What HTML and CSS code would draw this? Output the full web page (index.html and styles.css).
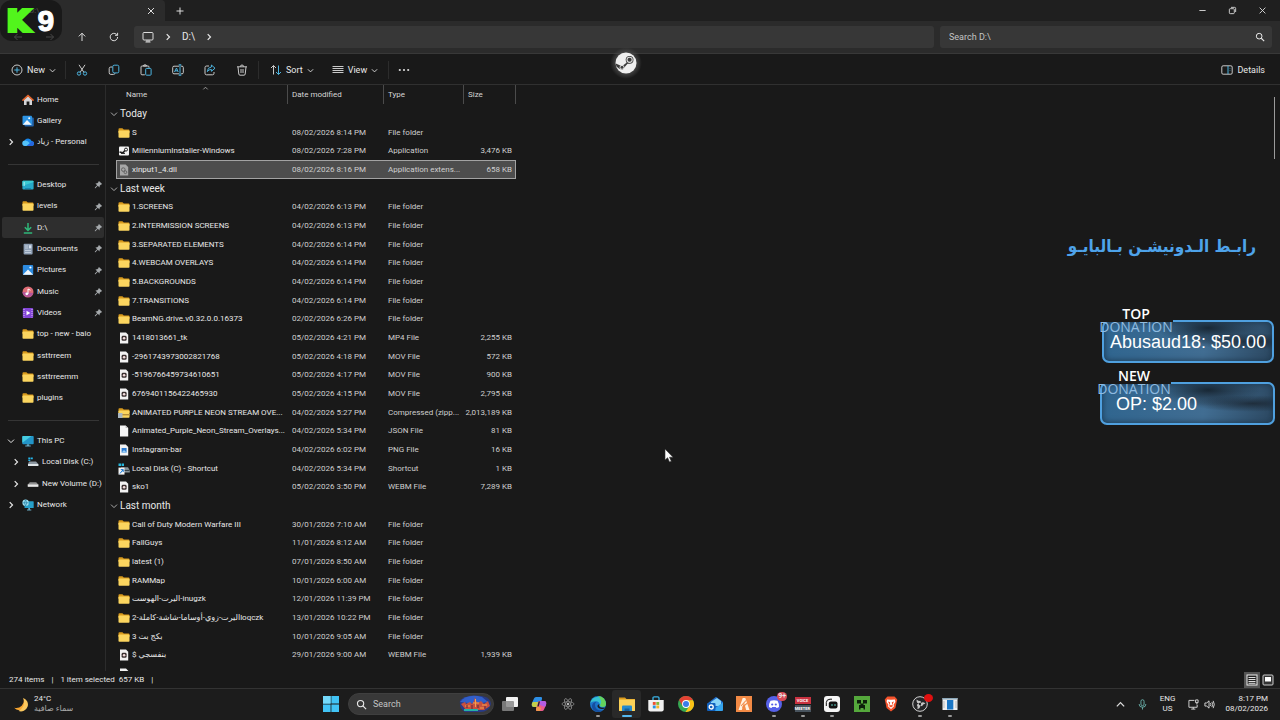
FILE: index.html
```html
<!DOCTYPE html>
<html lang="en">
<head>
    <meta charset="utf-8">
    <title>D:\</title>
    <link rel="stylesheet" href="styles.css">
</head>
<body>
    <!-- Shared icons -->
    <svg class="sprite" aria-hidden="true">
        <symbol id="folder" viewBox="0 0 12 12"><path d="M0.5 2.2Q.5 1.3 1.4 1.3H4.4L5.8 2.6H10.6Q11.5 2.6 11.5 3.5V6H.5Z" fill="#d99a1c"/><rect x=".5" y="3.4" width="11" height="7.4" rx=".8" fill="#fbd55f"/></symbol>
        <symbol id="zip" viewBox="0 0 12 12"><path d="M0.5 2.2Q.5 1.3 1.4 1.3H4.4L5.8 2.6H10.6Q11.5 2.6 11.5 3.5V6H.5Z" fill="#d99a1c"/><rect x=".5" y="3.4" width="11" height="7.4" rx=".8" fill="#fbd55f"/><path d="M0 7H12V8.4H0Z" fill="#b48d3a"/><rect x="0" y="6" width="4.5" height="5" fill="#a9b6c0"/></symbol>
        <symbol id="media" viewBox="0 0 12 12"><path d="M2 .5H8L10.2 2.7V11.5H2Z" fill="#f2f2f2"/><rect x="3.6" y="3.8" width="5" height="5" rx="1.4" fill="#3a3030"/><circle cx="6.1" cy="6.3" r="1.3" fill="#f4dede"/></symbol>
        <symbol id="blank" viewBox="0 0 12 12"><path d="M2 .5H7.6L10.2 3V11.5H2Z" fill="#f5f5f5"/><path d="M7.6 .5V3H10.2Z" fill="#b9b9b9"/></symbol>
        <symbol id="png" viewBox="0 0 12 12"><path d="M2 .5H7.8L10.2 2.9V11.5H2Z" fill="#f2f2f2"/><rect x="3.6" y="4" width="5" height="4.6" fill="#2b7cd3"/><path d="M3.6 8.6L6 6L8.6 8.6Z" fill="#9cd0f5"/></symbol>
        <symbol id="dll" viewBox="0 0 12 12"><path d="M2 .5H7.6L10.2 3V11.5H2Z" fill="#a6a6a6"/><circle cx="5.3" cy="5.6" r="1.8" fill="none" stroke="#626262"/><circle cx="7.4" cy="8.2" r="1.4" fill="none" stroke="#626262"/></symbol>
        <symbol id="exe" viewBox="0 0 12 12"><rect x="1" y="1.5" width="10" height="9" rx="1" fill="#f4f4f4"/><path d="M1.5 7L5 7.8L7.3 5" stroke="#222" stroke-width="1.5" fill="none"/><circle cx="8" cy="4.6" r="1.5" fill="#f4f4f4" stroke="#222"/><path d="M3 8.4H7" stroke="#222"/></symbol>
        <symbol id="shortcut" viewBox="0 0 12 12"><path d="M.5 .5H3V3H.5ZM3.6 .5H6V3H3.6Z" fill="#25b7dd"/><path d="M3 4.2H10L11.8 7.6V9.4H3Z" fill="#87939a"/><path d="M4 7.4H11.5" stroke="#303a40"/><rect x=".5" y="4.6" width="6" height="7" fill="#f2f2f2"/><path d="M2 10.5L5 6.8M2.8 6.6H5.2V9" stroke="#1478d4" fill="none"/></symbol>
        <symbol id="home" viewBox="0 0 12 12"><path d="M2 5.5L6 2L10 5.5V11H7.4V7.6H4.6V11H2Z" fill="#d5d5d8"/><path d="M1 6.2L6 1.5L11 6.2" stroke="#e2632b" stroke-width="1.6" fill="none" stroke-linecap="round"/></symbol>
        <symbol id="gallery" viewBox="0 0 12 12"><rect x="2.5" y="2.5" width="9.3" height="9" rx="1" fill="#2365ad"/><rect x=".5" y=".8" width="9.5" height="9.2" rx="1" fill="#2d94e4"/><path d="M.8 9.7L5 5L9.7 9.7Z" fill="#f1f7fc"/><circle cx="7.2" cy="3.2" r="1" fill="#fff"/></symbol>
        <symbol id="cloud" viewBox="0 0 12 12"><path d="M3 10A2.7 2.7 0 0 1 2.5 4.8A3.8 3.8 0 0 1 9.6 5A2.5 2.5 0 0 1 9.6 10Z" fill="#1685e8"/><path d="M3 10A2.7 2.7 0 0 1 3 4.6Q6 4.5 7.8 7.2L4.4 10Z" fill="#54c2f8"/><path d="M5 10L10.3 5.2A2.5 2.5 0 0 1 9.6 10Z" fill="#2864dc"/></symbol>
        <symbol id="desktop" viewBox="0 0 12 12"><rect x=".4" y="1.8" width="11.2" height="8.6" rx="1" fill="#27a9c9"/><path d="M.4 7L11.6 3V2.4L11 1.8H1L.4 2.5Z" fill="#3bcbd3"/><path d="M1.5 4H3M1.5 6H3" stroke="#d6fbff"/><path d="M3 9.6H9" stroke="#1476a4" stroke-width=".8"/></symbol>
        <symbol id="download" viewBox="0 0 12 12"><path d="M6 1V8M2.8 5.2L6 8.4L9.2 5.2M1.8 11H10.2" stroke="#2fb779" stroke-width="1.5" fill="none"/></symbol>
        <symbol id="documents" viewBox="0 0 12 12"><rect x="1.6" y=".7" width="9" height="10.8" rx="1" fill="#8fa0b5"/><path d="M3 3H6M3 5H6M3 7.5H9M3 9.5H9" stroke="#c3cfdd" stroke-width=".9"/><rect x="7" y="2.3" width="2.3" height="3" fill="#d8e2ee"/></symbol>
        <symbol id="pictures" viewBox="0 0 12 12"><rect x=".8" y=".9" width="10.4" height="10.2" rx="1" fill="#2c8be0"/><path d="M.9 10.8L6 5.5L11.1 10.8Z" fill="#f1f7fc"/><circle cx="8.4" cy="3.5" r="1.1" fill="#fff"/></symbol>
        <symbol id="music" viewBox="0 0 12 12"><circle cx="6" cy="6" r="5.5" fill="#df6d76"/><path d="M.5 6A5.5 5.5 0 0 0 11.3 7Z" fill="#b5569b"/><circle cx="4.8" cy="7.8" r="1.4" fill="#fff"/><path d="M6 8V3L8.4 4.2" stroke="#fff" fill="none"/></symbol>
        <symbol id="videos" viewBox="0 0 12 12"><rect x=".8" y=".9" width="10.4" height="10.2" rx="1" fill="#8345d8"/><path d="M2 2V10.5M10 2V10.5" stroke="#d7bdf8" stroke-dasharray="1 1"/><path d="M4.5 3.7L8.4 6L4.5 8.3Z" fill="#fff"/></symbol>
        <symbol id="pc" viewBox="0 0 12 12"><rect x=".3" y="1" width="11.4" height="8.3" rx=".8" fill="#2295c8"/><path d="M.3 7.8L9.5 1H1L.3 1.8Z" fill="#46cce0"/><path d="M4.8 9.3H7.2V10.6H8.8V11.4H3.2V10.6H4.8Z" fill="#63a6c1"/></symbol>
        <symbol id="diskc" viewBox="0 0 12 12"><path d="M1.3 1.4H3.3V3.2H1.3ZM3.8 1.4H5.8V3.2H3.8ZM1.3 3.7H3.3V5H1.3Z" fill="#25b7ed"/><path d="M2 5.5H9L11.3 8V10H1V8Z" fill="#8b969f"/><path d="M1 8H11.3V10H1Z" fill="#dde3e7"/></symbol>
        <symbol id="disk" viewBox="0 0 12 12"><path d="M2.8 4.2H9.2L11.3 6.5V8.7H.8V6.5Z" fill="#8e8e8e"/><path d="M.8 6.5H11.3V8.7H.8Z" fill="#e7e7e7"/></symbol>
        <symbol id="network" viewBox="0 0 12 12"><rect x="2.5" y="2.3" width="9.2" height="6.8" rx=".6" fill="#269fc9"/><path d="M6.3 9H8V10.6H9.3V11.4H5V10.6H6.3Z" fill="#6aabc4"/><circle cx="3.6" cy="3.8" r="3.2" fill="#9ee0f0"/><path d="M.6 3.8H6.6M3.6 .8Q1.2 3.8 3.6 7M3.6 .8Q6 3.8 3.6 7" stroke="#2480a8" fill="none" stroke-width=".7"/></symbol>
        <symbol id="pin" viewBox="0 0 10 10"><path d="M5.5 1L9 4.5L8.2 5L7.8 4.9L6.3 6.4L6.1 8.4L4.2 6.5L1.6 9.1L.9 9.2L1 8.4L3.5 5.8L1.6 3.9L3.6 3.7L5.1 2.2L5 1.8Z" fill="#a5a9ac"/></symbol>
        <symbol id="right" viewBox="0 0 8 8"><path d="M2.7 1.2L5.5 4L2.7 6.8" fill="none" stroke="currentColor" stroke-width="1.2"/></symbol>
        <symbol id="down" viewBox="0 0 8 8"><path d="M1 2.6L4 5.6L7 2.6" fill="none" stroke="currentColor"/></symbol>
        <symbol id="glass" viewBox="0 0 12 12"><circle cx="5" cy="5" r="3.4" fill="none" stroke="currentColor" stroke-width="1.2"/><path d="M7.5 7.5L11 11" stroke="currentColor" stroke-width="1.3"/></symbol>
        <symbol id="steam" viewBox="0 0 24 24"><circle cx="12" cy="12" r="10.5" fill="#eee"/><path d="M1.8 12.5L8 15.2L12.8 11.5L12 8L16 5L19 8.5L17 12L13.5 12.7L10.5 16.2L8.5 19L5 17.6L2.4 15.5Z" fill="#3b3b3b"/><circle cx="15.6" cy="8.8" r="3.9" fill="#3b3b3b"/><circle cx="15.6" cy="8.8" r="2.6" fill="none" stroke="#ddd" stroke-width="1.1"/><circle cx="8" cy="16.3" r="2" fill="none" stroke="#ddd"/></symbol>
    </svg>

    <header>
        <div class="titlebar">
            <div class="tab">
                <span>D:\</span>
                <button class="icon-btn" aria-label="Close tab"><svg viewBox="0 0 10 10"><path d="M2 2L8 8M8 2L2 8"/></svg></button>
            </div>
            <button class="icon-btn new-tab" aria-label="New tab"><svg viewBox="0 0 10 10"><path d="M5 1.5V8.5M1.5 5H8.5"/></svg></button>
            <div class="window-buttons">
                <button class="icon-btn" aria-label="Minimize"><svg viewBox="0 0 10 10"><path d="M1.5 5H8.5"/></svg></button>
                <button class="icon-btn" aria-label="Restore"><svg viewBox="0 0 10 10"><rect x="1.5" y="3" width="5.5" height="5.5" rx="1"/><path d="M3.3 1.5H7.4Q8.5 1.5 8.5 2.6V6.7"/></svg></button>
                <button class="icon-btn" aria-label="Close"><svg viewBox="0 0 10 10"><path d="M1.8 1.8L8.2 8.2M8.2 1.8L1.8 8.2"/></svg></button>
            </div>
        </div>
        <div class="navbar">
            <div class="nav-buttons">
                <button class="icon-btn" aria-label="Back"><svg viewBox="0 0 10 10"><path d="M9 5H1.5M4.5 2L1.5 5L4.5 8"/></svg></button>
                <button class="icon-btn" aria-label="Forward"><svg viewBox="0 0 10 10"><path d="M1 5H8.5M5.5 2L8.5 5L5.5 8"/></svg></button>
                <button class="icon-btn" aria-label="Up"><svg viewBox="0 0 10 10"><path d="M5 9V1.2M1.8 4.4L5 1.2L8.2 4.4"/></svg></button>
                <button class="icon-btn" aria-label="Refresh"><svg viewBox="0 0 10 10"><path d="M8.6 5A3.7 3.7 0 1 1 7.4 2.3L8.5 3.2M8.6 .8V3.3H6"/></svg></button>
            </div>
            <div class="address">
                <button class="icon-btn" aria-label="This PC"><svg viewBox="0 0 12 12"><rect x="1" y="1.5" width="10" height="7.5" rx="1"/><path d="M3.5 11H8.5M5 9V11M7 9V11"/></svg></button>
                <svg class="chev"><use href="#right"/></svg>
                <a href="#">D:\</a>
                <svg class="chev"><use href="#right"/></svg>
            </div>
            <label class="find">
                <input type="text" placeholder="Search D:\" aria-label="Search D:\">
                <svg><use href="#glass"/></svg>
            </label>
        </div>
        <div class="toolbar">
            <button class="tool new"><svg viewBox="0 0 12 12"><circle cx="6" cy="6" r="5"/><path class="blue" d="M6 3.3V8.7M3.3 6H8.7"/></svg>New<svg class="chev"><use href="#down"/></svg></button>
            <div class="tool-group">
                <button class="tool" aria-label="Cut"><svg viewBox="0 0 12 12"><path d="M3 .8L8 8.5M9 .8L4 8.5"/><g class="blue"><circle cx="3" cy="9.5" r="1.7"/><circle cx="9" cy="9.5" r="1.7"/></g></svg></button>
                <button class="tool" aria-label="Copy"><svg viewBox="0 0 12 12"><path d="M4.5 3H2.8Q1.2 3 1.2 4.5V8.8Q1.2 10.4 2.8 10.4H5.5Q7 10.4 7 9.2"/><rect class="blue" x="4.8" y="1.2" width="6" height="7.7" rx="1.4"/></svg></button>
                <button class="tool" aria-label="Paste"><svg viewBox="0 0 12 12"><path d="M4.8 10.8H2Q1 10.8 1 9.8V3Q1 2 2 2H8Q9 2 9 3V3.8M3.4 2Q3.4 .8 5 .8T6.6 2Z"/><rect class="blue" x="5.7" y="4.4" width="5.4" height="6.8" rx=".8"/></svg></button>
                <button class="tool" aria-label="Rename"><svg viewBox="0 0 12 12"><path d="M7 2.2H2Q.7 2.2 .7 3.5V8.5Q.7 9.8 2 9.8H7M9 2.2H10Q11.3 2.2 11.3 3.5V8.5Q11.3 9.8 10 9.8H9"/><path class="blue" d="M8 .8V11.2M6.7 .8H9.3M6.7 11.2H9.3M2.5 8L4.5 4L6.2 8M3.1 6.8H5.6"/></svg></button>
                <button class="tool" aria-label="Share"><svg viewBox="0 0 12 12"><path d="M5 2H2.5Q1 2 1 3.5V9.3Q1 10.8 2.5 10.8H8.5Q10 10.8 10 9.3V8"/><path class="blue" d="M7.4 1L11 4.2L7.4 7.3V5.5Q4.8 5.3 3.3 7.6Q3.5 3.3 7.4 3Z"/></svg></button>
                <button class="tool" aria-label="Delete"><svg viewBox="0 0 12 12"><path d="M1 2.8H11M4.4 2.6Q4.4 1 6 1T7.6 2.6M2 3L2.8 10Q2.9 11.2 4 11.2H8Q9.1 11.2 9.2 10L10 3M5 5V9M7 5V9"/></svg></button>
            </div>
            <button class="tool"><svg viewBox="0 0 12 12"><path d="M3.5 10.5V1.5M1 4L3.5 1.5L6 4"/><path class="blue" d="M8.5 1.5V10.5M6 8L8.5 10.5L11 8"/></svg>Sort<svg class="chev"><use href="#down"/></svg></button>
            <button class="tool view"><svg viewBox="0 0 12 12"><path d="M.5 2.5H11.5M.5 4.5H11.5M.5 6.5H11.5M.5 8.5H11.5"/></svg>View<svg class="chev"><use href="#down"/></svg></button>
            <button class="tool more" aria-label="See more"><svg viewBox="0 0 12 12"><circle cx="1.8" cy="6" r="1.1"/><circle cx="6" cy="6" r="1.1"/><circle cx="10.2" cy="6" r="1.1"/></svg></button>
            <button class="tool details"><svg viewBox="0 0 12 12"><rect x=".8" y="1.8" width="10.4" height="8.4" rx="1.3"/><path class="blue" d="M7 2V10M9 4.3V4.8M9 6V6.5"/></svg>Details</button>
        </div>
    </header>

    <main>
        <nav class="sidebar">
            <ul>
                <li><a href="#"><svg class="ico"><use href="#home"/></svg>Home</a></li>
                <li><a href="#"><svg class="ico"><use href="#gallery"/></svg>Gallery</a></li>
                <li><a href="#"><svg class="arrow"><use href="#right"/></svg><svg class="ico"><use href="#cloud"/></svg>زياد - Personal</a></li>
                <li class="line"></li>
                <li><a href="#"><svg class="ico"><use href="#desktop"/></svg>Desktop<svg class="pin"><use href="#pin"/></svg></a></li>
                <li><a href="#"><svg class="ico"><use href="#folder"/></svg>levels<svg class="pin"><use href="#pin"/></svg></a></li>
                <li class="active"><a href="#"><svg class="ico"><use href="#download"/></svg>D:\<svg class="pin"><use href="#pin"/></svg></a></li>
                <li><a href="#"><svg class="ico"><use href="#documents"/></svg>Documents<svg class="pin"><use href="#pin"/></svg></a></li>
                <li><a href="#"><svg class="ico"><use href="#pictures"/></svg>Pictures<svg class="pin"><use href="#pin"/></svg></a></li>
                <li><a href="#"><svg class="ico"><use href="#music"/></svg>Music<svg class="pin"><use href="#pin"/></svg></a></li>
                <li><a href="#"><svg class="ico"><use href="#videos"/></svg>Videos<svg class="pin"><use href="#pin"/></svg></a></li>
                <li><a href="#"><svg class="ico"><use href="#folder"/></svg>top - new - baio</a></li>
                <li><a href="#"><svg class="ico"><use href="#folder"/></svg>ssttrreem</a></li>
                <li><a href="#"><svg class="ico"><use href="#folder"/></svg>ssttrreemm</a></li>
                <li><a href="#"><svg class="ico"><use href="#folder"/></svg>plugins</a></li>
                <li class="line"></li>
                <li><a href="#"><svg class="arrow"><use href="#down"/></svg><svg class="ico"><use href="#pc"/></svg>This PC</a></li>
                <li class="child"><a href="#"><svg class="arrow"><use href="#right"/></svg><svg class="ico"><use href="#diskc"/></svg>Local Disk (C:)</a></li>
                <li class="child"><a href="#"><svg class="arrow"><use href="#right"/></svg><svg class="ico"><use href="#disk"/></svg>New Volume (D:)</a></li>
                <li><a href="#"><svg class="arrow"><use href="#right"/></svg><svg class="ico"><use href="#network"/></svg>Network</a></li>
            </ul>
        </nav>

        <section class="files">
            <table>
                <colgroup><col class="c-name"><col class="c-date"><col class="c-type"><col class="c-size"></colgroup>
                <thead>
                    <tr><th>Name<svg class="sorted" viewBox="0 0 8 8"><path d="M1.5 5L4 2.5L6.5 5"/></svg></th><th>Date modified</th><th>Type</th><th>Size</th></tr>
                </thead>
                <tbody>
                    <tr class="group"><th colspan="4"><svg><use href="#down"/></svg>Today</th></tr>
                    <tr><td><svg><use href="#folder"/></svg>S</td><td>08/02/2026 8:14 PM</td><td>File folder</td><td></td></tr>
                    <tr><td><svg><use href="#exe"/></svg>MillenniumInstaller-Windows</td><td>08/02/2026 7:28 PM</td><td>Application</td><td>3,476 KB</td></tr>
                    <tr class="selected"><td><svg><use href="#dll"/></svg>xinput1_4.dll</td><td>08/02/2026 8:16 PM</td><td>Application extens...</td><td>658 KB</td></tr>
                    <tr class="group"><th colspan="4"><svg><use href="#down"/></svg>Last week</th></tr>
                    <tr><td><svg><use href="#folder"/></svg>1.SCREENS</td><td>04/02/2026 6:13 PM</td><td>File folder</td><td></td></tr>
                    <tr><td><svg><use href="#folder"/></svg>2.INTERMISSION SCREENS</td><td>04/02/2026 6:13 PM</td><td>File folder</td><td></td></tr>
                    <tr><td><svg><use href="#folder"/></svg>3.SEPARATED ELEMENTS</td><td>04/02/2026 6:14 PM</td><td>File folder</td><td></td></tr>
                    <tr><td><svg><use href="#folder"/></svg>4.WEBCAM OVERLAYS</td><td>04/02/2026 6:14 PM</td><td>File folder</td><td></td></tr>
                    <tr><td><svg><use href="#folder"/></svg>5.BACKGROUNDS</td><td>04/02/2026 6:14 PM</td><td>File folder</td><td></td></tr>
                    <tr><td><svg><use href="#folder"/></svg>7.TRANSITIONS</td><td>04/02/2026 6:14 PM</td><td>File folder</td><td></td></tr>
                    <tr><td><svg><use href="#folder"/></svg>BeamNG.drive.v0.32.0.0.16373</td><td>02/02/2026 6:26 PM</td><td>File folder</td><td></td></tr>
                    <tr><td><svg><use href="#media"/></svg>1418013661_tk</td><td>05/02/2026 4:21 PM</td><td>MP4 File</td><td>2,255 KB</td></tr>
                    <tr><td><svg><use href="#media"/></svg>-2961743973002821768</td><td>05/02/2026 4:18 PM</td><td>MOV File</td><td>572 KB</td></tr>
                    <tr><td><svg><use href="#media"/></svg>-5196766459734610651</td><td>05/02/2026 4:17 PM</td><td>MOV File</td><td>900 KB</td></tr>
                    <tr><td><svg><use href="#media"/></svg>6769401156422465930</td><td>05/02/2026 4:15 PM</td><td>MOV File</td><td>2,795 KB</td></tr>
                    <tr><td><svg><use href="#zip"/></svg>ANIMATED PURPLE NEON STREAM OVE...</td><td>04/02/2026 5:27 PM</td><td>Compressed (zipp...</td><td>2,013,189 KB</td></tr>
                    <tr><td><svg><use href="#blank"/></svg>Animated_Purple_Neon_Stream_Overlays...</td><td>04/02/2026 5:34 PM</td><td>JSON File</td><td>81 KB</td></tr>
                    <tr><td><svg><use href="#png"/></svg>Instagram-bar</td><td>04/02/2026 6:02 PM</td><td>PNG File</td><td>16 KB</td></tr>
                    <tr><td><svg><use href="#shortcut"/></svg>Local Disk (C) - Shortcut</td><td>04/02/2026 5:34 PM</td><td>Shortcut</td><td>1 KB</td></tr>
                    <tr><td><svg><use href="#media"/></svg>sko1</td><td>05/02/2026 3:50 PM</td><td>WEBM File</td><td>7,289 KB</td></tr>
                    <tr class="group"><th colspan="4"><svg><use href="#down"/></svg>Last month</th></tr>
                    <tr><td><svg><use href="#folder"/></svg>Call of Duty Modern Warfare III</td><td>30/01/2026 7:10 AM</td><td>File folder</td><td></td></tr>
                    <tr><td><svg><use href="#folder"/></svg>FallGuys</td><td>11/01/2026 8:12 AM</td><td>File folder</td><td></td></tr>
                    <tr><td><svg><use href="#folder"/></svg>latest (1)</td><td>07/01/2026 8:50 AM</td><td>File folder</td><td></td></tr>
                    <tr><td><svg><use href="#folder"/></svg>RAMMap</td><td>10/01/2026 6:00 AM</td><td>File folder</td><td></td></tr>
                    <tr><td><svg><use href="#folder"/></svg>اليرت-الهوست-inugzk</td><td>12/01/2026 11:39 PM</td><td>File folder</td><td></td></tr>
                    <tr><td><svg><use href="#folder"/></svg>اليرت-زوي-أوساما-شاشة-كاملة-2loqczk</td><td>13/01/2026 10:22 PM</td><td>File folder</td><td></td></tr>
                    <tr><td><svg><use href="#folder"/></svg>بكج بث 3</td><td>10/01/2026 9:05 AM</td><td>File folder</td><td></td></tr>
                    <tr><td><svg><use href="#media"/></svg>$ بنفسجي</td><td>29/01/2026 9:00 AM</td><td>WEBM File</td><td>1,939 KB</td></tr>
                    <tr><td><svg><use href="#media"/></svg>4k alert</td><td>18/01/2026 10:12 PM</td><td>WEBM File</td><td>20,290 KB</td></tr>
                </tbody>
            </table>
            <div class="scroll"></div>
        </section>
    </main>

    <footer class="status">
        <span>274 items</span><span>|</span><span>1 item selected&nbsp; 657 KB</span><span>|</span>
        <div class="modes">
            <button class="on" aria-label="Details view"><svg viewBox="0 0 12 12"><rect x="1" y="1" width="10" height="10" fill="#222" stroke="#eee"/><path d="M2.5 3.5H9.5M2.5 5.5H9.5M2.5 7.5H9.5M2.5 9.3H9.5" stroke="#ddd"/></svg></button>
            <button aria-label="Large icons"><svg viewBox="0 0 12 12"><rect x="1" y="1" width="10" height="10" rx="1" fill="#333" stroke="#ccc"/><rect x="3" y="3" width="6" height="4.5" fill="#fff"/></svg></button>
        </div>
    </footer>

    <div class="taskbar">
        <button class="weather">
            <svg viewBox="0 0 16 16"><path d="M11 1A7.2 7.2 0 1 1 1.2 11.4A8 8 0 0 0 11 1Z" fill="#f6a531"/><path d="M11 1A7.2 7.2 0 0 1 6 15Q14 10 11 1Z" fill="#fbc85e"/></svg>
            <span>24°C<small>سماء صافية</small></span>
        </button>
        <div class="apps">
            <button class="app" aria-label="Start"><svg viewBox="0 0 16 16"><path d="M0 0H7.6V7.6H0ZM8.4 0H16V7.6H8.4ZM0 8.4H7.6V16H0ZM8.4 8.4H16V16H8.4Z" fill="#41c3f5"/><path d="M0 0H7.6V7.6H0Z" fill="#74d9fa"/></svg></button>
            <label class="task-search">
                <svg class="glass"><use href="#glass"/></svg>
                <input type="text" placeholder="Search" aria-label="Search">
                <svg class="art" viewBox="0 0 34 18"><path d="M2 5Q10-1 24 1Q33 3 33 9Q31 17 22 17H7Q1 14 2 5Z" fill="#283a86"/><path d="M2 7Q9-2 24 2L30 7L18 9Z" fill="#315fca"/><path d="M3 9L7 7L8 9L12 7L14 9L16 6L17 2L18 6L20 8L23 6L26 9L30 6L32 11L26 15H8Z" fill="#c8503f"/><path d="M7 11H12M15 8H21M24 10H29M17.5 4V12M22 13H26" stroke="#f4a04e"/><path d="M9 10V13M14 10V14M20 10V13M27 11V14" stroke="#5b2440"/><path d="M6 15H20" stroke="#27b0a7" stroke-width="2"/></svg>
            </label>
            <div class="pinned">
                <button class="app" aria-label="Task view"><svg viewBox="0 0 16 16"><rect x="4" y="1" width="12" height="10" rx="1" fill="#f2f2f2"/><rect x="0" y="5" width="12" height="10" rx="1" fill="#888" fill-opacity=".85"/></svg></button>
                <button class="app" aria-label="Copilot"><svg viewBox="0 0 16 16"><path d="M5 1H10Q11.5 1 11 3L8.5 11H3Q0 11 1 7L3 2.5Q3.5 1 5 1Z" fill="#2d8fe6"/><path d="M2 6L8 6L6 11H3Q0 11 1 7Z" fill="#c2cf4a"/><path d="M7.5 5H13Q16 5 15 9L13 13.5Q12.4 15 11 15H6Q4.5 15 5 13Z" fill="#ec5b8c"/><path d="M8.7 5H13Q16 5 15 9L14 11L9 9Z" fill="#b45de2"/><path d="M5 13L6 9.7L10 12L9 15H6Q4.6 15 5 13Z" fill="#f1964a"/><path d="M7.6 5.5H9L7.7 10.5H6.3Z" fill="#20242e"/></svg></button>
                <button class="app" aria-label="Electron"><svg viewBox="0 0 16 16"><g fill="none" stroke="#8a8a8a" stroke-width=".8"><ellipse cx="8" cy="8" rx="6" ry="2.3"/><ellipse cx="8" cy="8" rx="6" ry="2.3" transform="rotate(60 8 8)"/><ellipse cx="8" cy="8" rx="6" ry="2.3" transform="rotate(120 8 8)"/></g><circle cx="8" cy="8" r="1.2" fill="#bbb"/></svg></button>
                <button class="app running" aria-label="Edge"><svg viewBox="0 0 16 16"><circle cx="8" cy="8" r="8" fill="#1c75cb"/><path d="M.2 7A8 8 0 0 1 16 8Q15.8 11 12.5 11Q9.3 11 9.8 8.5Q9.5 5.5 6 5.2Q2 5 .2 7Z" fill="#35c1d0"/><path d="M8 0A8 8 0 0 1 16 8Q15.8 11 12.5 11Q10.4 11 10 9.6Q13 4.5 8 0Z" fill="#65d35c"/><path d="M5 8.5Q4.8 15 12.6 14.6A8 8 0 0 1 8 16Q1.8 15 2 10Q2.4 6 6.5 5.7Q5 7 5 8.5Z" fill="#164e9e"/><path d="M9.6 8.2Q8.4 9.2 9.4 10.6Q11 12.4 14.6 11.6L14 12.8Q8.5 13.6 7.4 10.3Q7.4 8.2 9.6 8.2Z" fill="#1c1c1c"/></svg></button>
                <button class="app running current" aria-label="File Explorer"><svg viewBox="0 0 16 16"><path d="M0 1.5H6L7.5 3H16V7H0Z" fill="#dc9b1d"/><rect y="3.5" width="16" height="11.5" rx=".6" fill="#fbd158"/><path d="M3 15V10.4Q3 9.4 4 9.4H12Q13 9.4 13 10.4V15Z" fill="#2489cd"/><path d="M5.5 12.5H10.5V15H5.5Z" fill="#145f9b"/></svg></button>
                <button class="app" aria-label="Store"><svg viewBox="0 0 16 16"><path d="M5 4V2Q5 .8 6.2 .8H9.8Q11 .8 11 2V4" fill="none" stroke="#39b3e7" stroke-width="1.3"/><path d="M.3 4H15.7V13.5Q15.7 15.6 13.6 15.6H2.4Q.3 15.6 .3 13.5Z" fill="#f1f1f1"/><path d="M4.8 6H7.7V8.9H4.8Z" fill="#ec5330"/><path d="M8.3 6H11.2V8.9H8.3Z" fill="#80b83c"/><path d="M4.8 9.5H7.7V12.4H4.8Z" fill="#2a93de"/><path d="M8.3 9.5H11.2V12.4H8.3Z" fill="#f5b829"/></svg></button>
                <button class="app" aria-label="Chrome"><svg viewBox="0 0 16 16"><circle cx="8" cy="8" r="8" fill="#36a852"/><path d="M1.1 4A8 8 0 0 1 15 4.2H8L4.6 10Z" fill="#e34133"/><path d="M8 4.2H15A8 8 0 0 1 7.5 16L11.4 10Z" fill="#fbc116"/><circle cx="8" cy="8" r="3.9" fill="#fff"/><circle cx="8" cy="8" r="3" fill="#3b7de9"/></svg></button>
                <button class="app" aria-label="Outlook"><svg viewBox="0 0 16 16"><path d="M1 7L9 .8L16 6V13.5Q16 15 14.5 15H4Q1 15 1 13Z" fill="#1f6ccc"/><path d="M4 6L10 2L14 5V10H4Z" fill="#88d4f8"/><path d="M16 6.5V13.5Q16 15 14.5 15H4Z" fill="#35a5ee"/><rect x="0" y="7" width="8.5" height="8" rx="1" fill="#1261bd"/><circle cx="4.2" cy="11" r="2" fill="none" stroke="#fff" stroke-width="1.3"/></svg></button>
                <button class="app" aria-label="FiveM"><svg viewBox="0 0 16 16"><rect width="16" height="16" fill="#f28a45"/><path d="M2.5 14L6.7 2H9.3L13.5 14H10.2L8 6.5L5.8 14Z" fill="#fff1df"/><path d="M5 10L10 4.5M6.3 11.5L11.5 6.8" stroke="#f28a45" stroke-width="1.1"/></svg></button>
                <button class="app running" aria-label="Discord"><svg viewBox="0 0 16 16"><circle cx="8" cy="8" r="8" fill="#5661e8"/><path d="M4.5 4.8Q8 3.5 11.5 4.8Q13.3 7.8 13 11Q11.5 12 10.5 12L9.8 11H6.2L5.5 12Q4.5 12 3 11Q2.7 7.8 4.5 4.8Z" fill="#fff"/><circle cx="6.2" cy="8.5" r="1.1" fill="#5661e8"/><circle cx="9.8" cy="8.5" r="1.1" fill="#5661e8"/></svg><b class="badge">9+</b></button>
                <button class="app running voice" aria-label="Voicemeeter"><span>VOICE</span><span>MEETER</span></button>
                <button class="app running" aria-label="Stream tool"><svg viewBox="0 0 16 16"><rect width="16" height="16" rx="3" fill="#f5f5f5"/><rect x="4.8" y="5.5" width="8.7" height="7" rx="2" fill="#111"/><circle cx="8" cy="9" r=".8" fill="#6ae1d3"/><circle cx="11" cy="9" r=".8" fill="#6ae1d3"/><path d="M2.3 10V6.5Q2.5 3.3 6 3.2H8" stroke="#111" fill="none"/></svg></button>
                <button class="app" aria-label="Minecraft launcher"><svg viewBox="0 0 16 16"><rect width="16" height="16" fill="#55a83c"/><path d="M3 4H7V7.5H3ZM9 4H13V7.5H9ZM6.5 7.5H9.5V9H11V13.5H9.5V12H6.5V13.5H5V9H6.5Z" fill="#0d200b"/></svg></button>
                <button class="app" aria-label="Brave"><svg viewBox="0 0 16 16"><path d="M4.5 .5H11.5L13 2L14.3 3.7L13.8 5.5L12.4 12L8 15.5L3.6 12L2.2 5.5L1.7 3.7L3 2Z" fill="#f4522b"/><path d="M8 3.8L12 3.5L12.4 6L10.5 8.7L11 10.3L8 13L5 10.3L5.5 8.7L3.6 6L4 3.5Z" fill="#fff"/><path d="M5 5.6L7.2 6.3L6.8 8.4L8 9.5L9.2 8.4L8.8 6.3L11 5.6L9.3 9L10 10L8 11.5L6 10L6.7 9Z" fill="#f4522b"/></svg></button>
                <button class="app running" aria-label="OBS Studio"><svg viewBox="0 0 16 16"><circle cx="8" cy="8" r="7.3" fill="#252527" stroke="#d3d3d3" stroke-width="1"/><g fill="#c5c5c5"><path d="M8 8Q4 7.4 4.6 3.4Q6.5 5.2 8.6 5Q9.4 6.8 8 8Z"/><path d="M8 8Q10.4 4.8 13.4 7.6Q10.8 8.2 10 10.2Q8.2 10.2 8 8Z"/><path d="M8 8Q9.3 12.2 5.4 13Q6.2 10.6 4.8 9Q5.8 7.4 8 8Z"/></g><circle cx="8" cy="8" r="1.2" fill="#252527"/></svg><i class="rec"></i></button>
                <button class="app running" aria-label="Window"><svg viewBox="0 0 16 16"><rect x=".5" y="2" width="15" height="12" fill="#eee"/><path d="M.5 2H15.5V3.5H.5Z" fill="#8ba7b9"/><rect x="5" y="4" width="6.3" height="9.5" fill="#1b76c4"/><path d="M2 5V12M14 5V12" stroke="#bbb"/></svg></button>
            </div>
        </div>
        <div class="tray">
            <button aria-label="Hidden icons"><svg viewBox="0 0 12 12"><path d="M2 8L6 4L10 8" stroke-width="1.4"/></svg></button>
            <button class="mic" aria-label="Microphone"><svg viewBox="0 0 12 12"><rect x="4.3" y=".8" width="3.4" height="6.5" rx="1.7"/><path d="M2.3 5.5Q2.3 9 6 9T9.7 5.5M6 9V11.5"/></svg></button>
            <button class="lang">ENG<br>US</button>
            <button class="sound" aria-label="Network and volume"><svg viewBox="0 0 12 12"><path d="M7 1.5H1V9H10V6.5M3.5 11H8M5.7 9V11M8.3 1H11V4H8.3ZM9.7 4V6"/></svg><svg viewBox="0 0 12 12"><path d="M1 4.3H3L5.5 2V10L3 7.7H1ZM7 4.5Q8 6 7 7.5M8.6 3.2Q10.3 6 8.6 8.8M10 2Q12.5 6 10 10"/></svg></button>
            <button class="clock">8:17 PM<br>08/02/2026</button>
        </div>
    </div>

    <!-- Stream overlays, float over the desktop -->
    <div class="logo"><b>K</b><span>9</span></div>
    <div class="steam-badge"><svg><use href="#steam"/></svg></div>
    <div class="bio" lang="ar" dir="rtl">رابـط الـدونيشـن بـالبايـو</div>
    <div class="donation top"><h2>TOP<span>DONATION</span></h2><p>Abusaud18: $50.00</p></div>
    <div class="donation latest"><h2>NEW<span>DONATION</span></h2><p>OP: $2.00</p></div>
    <svg class="cursor" viewBox="0 0 10 15"><path d="M1 1V12L3.6 9.7L5.5 14L7.3 13.2L5.5 9.2H9Z" fill="#fff" stroke="#333" stroke-width=".6"/></svg>
</body>
</html>
```
FILE: styles.css
```css
/* General */
* {
    box-sizing: border-box;
}

body {
    margin: 0;
    height: 100vh;
    display: flex;
    flex-direction: column;
    overflow: hidden;
    position: relative;
    background: #191919;
    color: #e8e8e8;
    font-family: Roboto, "Open Sans", "DejaVu Sans", sans-serif;
    font-size: 8px;
    line-height: 12px;
}

button {
    border: none;
    background: none;
    padding: 0;
    color: inherit;
    font: inherit;
}

a {
    color: inherit;
    text-decoration: none;
}

input {
    flex: 1;
    min-width: 0;
    border: none;
    outline: none;
    padding: 0;
    background: none;
    color: #ddd;
    font: inherit;
}

input::placeholder {
    color: #c4c4c4;
}

svg {
    display: block;
    flex-shrink: 0;
}

.sprite {
    display: none;
}

/* Title bar and tabs */
.titlebar {
    display: flex;
    align-items: center;
    height: 21px;
    background: #1f1f1f;
}

.tab {
    display: flex;
    align-items: center;
    justify-content: space-between;
    width: 165px;
    height: 21px;
    padding: 0 8px 0 29px;
    background: #2b2b2b;
    border-radius: 0 4px 0 0;
}

.icon-btn {
    width: 12px;
    height: 12px;
    display: flex;
    align-items: center;
    justify-content: center;
}

.icon-btn svg {
    width: 10px;
    height: 10px;
    fill: none;
    stroke: #ddd;
    stroke-width: 1;
}

.new-tab {
    margin-left: 9px;
}

.window-buttons {
    display: flex;
    gap: 18px;
    margin-left: auto;
    padding-right: 12px;
}

.window-buttons svg {
    width: 9px;
    height: 9px;
}

/* Address row */
.navbar {
    display: flex;
    align-items: center;
    gap: 6px;
    height: 33px;
    padding-right: 8px;
    background: #2b2b2b;
    border-bottom: 1px solid #383838;
}

.nav-buttons {
    display: flex;
    gap: 20px;
    width: 128px;
    padding-left: 12px;
}

.address {
    display: flex;
    flex: 1;
    align-items: center;
    gap: 10px;
    height: 22px;
    padding-left: 8px;
    border-radius: 3px;
    background: #373737;
    font-size: 10px;
}

.address svg {
    width: 12px;
    height: 12px;
}

.address .chev {
    width: 8px;
    height: 8px;
}

.find {
    display: flex;
    align-items: center;
    width: 332px;
    height: 22px;
    padding: 0 7px 0 9px;
    border-radius: 3px;
    background: #373737;
    font-size: 9px;
}

.find svg {
    width: 10px;
    height: 10px;
}

/* Command bar */
.toolbar {
    display: flex;
    align-items: center;
    height: 31px;
    padding: 2px 15px 0 11px;
    border-bottom: 1px solid #303030;
    font-size: 9px;
}

.tool {
    display: flex;
    align-items: center;
    gap: 4px;
}

.tool svg {
    width: 12px;
    height: 12px;
    fill: none;
    stroke: #c9c9c9;
    stroke-width: 1;
}

.tool .blue {
    stroke: #4cb4e0;
}

.tool .chev {
    width: 7px;
    height: 7px;
}

.new {
    width: 54px;
}

.tool-group {
    display: flex;
    gap: 20px;
    padding: 3px 10px;
    margin-right: 11px;
    border: solid #2c2c2c;
    border-width: 0 1px;
}

.view {
    margin: 0 10px 0 18px;
}

.more {
    padding: 3px 0 3px 9px;
    border-left: 1px solid #2c2c2c;
}

.more circle {
    fill: #ddd;
    stroke: none;
}

.details {
    margin-left: auto;
}

/* Body */
main {
    display: flex;
    flex: 1;
    min-height: 0;
}

.sidebar {
    width: 106px;
    flex-shrink: 0;
    padding-top: 4px;
    border-right: 1px solid #2b2b2b;
}

.sidebar ul {
    list-style: none;
    margin: 0;
    padding: 0 1px 0 2px;
}

.sidebar li {
    height: 21px;
}

.sidebar li:nth-child(3n) {
    height: 22px;
}

.sidebar a {
    display: flex;
    align-items: center;
    height: 100%;
    padding-left: 20px;
    white-space: nowrap;
}

.ico {
    width: 12px;
    height: 12px;
    margin-right: 3px;
}

.arrow {
    width: 8px;
    height: 8px;
    margin: 0 7px 0 -15px;
}

.child a {
    padding-left: 25px;
}

.pin {
    width: 9px;
    height: 9px;
    margin: 0 1px 0 auto;
}

.sidebar .active {
    background: #2e2e2e;
    border-radius: 2px;
}

.line::before {
    content: "";
    display: block;
    margin: 0 5px 0 6px;
    height: 11px;
    border-bottom: 1px solid #353535;
}

/* File list */
.files {
    flex: 1;
    display: flex;
    justify-content: space-between;
    align-items: flex-start;
    overflow: hidden;
    padding: 0 5px 0 10px;
}

table {
    table-layout: fixed;
    width: 400px;
    border-collapse: separate;
    border-spacing: 0;
}

.c-name {
    width: 172px;
}

.c-date {
    width: 96px;
}

.c-type {
    width: 80px;
}

th,
td {
    height: 19px;
    padding: 0 0 0 4px;
    text-align: left;
    font-weight: normal;
    white-space: nowrap;
    line-height: 12px;
}

thead th {
    border-right: 1px solid #4b4b4b;
    color: #d5d5d5;
}

thead th:first-child {
    padding-left: 10px;
    position: relative;
}

.sorted {
    position: absolute;
    top: 0;
    left: 50%;
    width: 7px;
    height: 7px;
    fill: none;
    stroke: #aaa;
}

tbody tr:nth-child(3n) td,
tbody tr:nth-child(3n) th {
    height: 18px;
}

td {
    color: #cfcfcf;
}

td:first-child {
    padding-left: 2px;
    color: #e8e8e8;
}

td svg {
    display: inline-block;
    vertical-align: top;
    width: 12px;
    height: 12px;
    margin-right: 2px;
}

td:last-child {
    padding: 0 4px 0 0;
    text-align: right;
}

.group th {
    padding: 0;
    font-size: 10px;
}

.group svg {
    display: inline-block;
    vertical-align: top;
    width: 8px;
    height: 12px;
    margin: 0 2px 0 -6px;
    color: #aaa;
}

.selected td {
    background: #4d4d4d;
    border: solid #a3a3a3;
    border-width: 1px 0;
}

.selected td:first-child {
    border-left-width: 1px;
    padding-left: 1px;
}

.selected td:last-child {
    border-right-width: 1px;
    padding-right: 3px;
}

.scroll {
    width: 1px;
    height: 62px;
    margin-top: 12px;
    background: #9b9b9b;
}

/* Status bar */
.status {
    display: flex;
    align-items: center;
    gap: 7px;
    height: 17px;
    padding: 0 4px 0 9px;
    background: #191919;
}

.modes {
    display: flex;
    margin-left: auto;
}

.modes button {
    padding: 2px;
}

.modes .on {
    background: #555;
}

.modes svg {
    width: 12px;
    height: 12px;
}

/* Taskbar */
.taskbar {
    display: grid;
    grid-template-columns: 1fr auto 1fr;
    height: 32px;
    padding-bottom: 1px;
    background: #1c1c1c;
    border-top: 1px solid #333;
}

.weather {
    display: flex;
    align-items: center;
    gap: 6px;
    padding-left: 13px;
    text-align: left;
    line-height: 10px;
}

.weather svg {
    width: 15px;
    height: 15px;
}

.weather small {
    display: block;
    color: #aaa;
    font-size: 8px;
}

.apps,
.pinned {
    display: flex;
    align-items: center;
}

.app {
    position: relative;
    display: flex;
    align-items: center;
    justify-content: center;
    width: 29px;
    height: 28px;
}

.app:nth-child(3n) {
    width: 30px;
}

.app svg {
    width: 16px;
    height: 16px;
}

.running::after {
    content: "";
    position: absolute;
    bottom: 1px;
    width: 4px;
    height: 2px;
    border-radius: 1px;
    background: #999;
}

.current {
    background: #292929;
    border-radius: 3px;
}

.current::after {
    width: 10px;
    background: #55b9ef;
}

.task-search {
    display: flex;
    align-items: center;
    gap: 6px;
    width: 146px;
    height: 22px;
    margin: 0 1px 0 3px;
    padding: 0 1px 0 7px;
    border: 1px solid #3f3f3f;
    border-radius: 11px;
    background: #383838;
    font-size: 9px;
}

.glass {
    width: 11px;
    height: 11px;
}

.art {
    width: 34px;
    height: 18px;
}

.badge {
    position: absolute;
    top: 2px;
    right: 1px;
    padding: 0 1px;
    border-radius: 5px;
    background: #d94a56;
    font-size: 7px;
    line-height: 9px;
}

.rec {
    position: absolute;
    top: 4px;
    right: 2px;
    width: 9px;
    height: 8px;
    border-radius: 50%;
    background: #e01010;
}

.voice {
    flex-direction: column;
    color: #fff;
    font-size: 4px;
    font-weight: bold;
    line-height: 7px;
}

.voice span {
    width: 16px;
    height: 7px;
    background: #c93240;
}

.voice span + span {
    margin-top: 1px;
    background: #48535d;
}

.tray {
    display: flex;
    align-items: center;
    justify-content: flex-end;
    padding-right: 12px;
    line-height: 10px;
}

.tray svg {
    width: 11px;
    height: 11px;
    fill: none;
    stroke: #ddd;
}

.mic {
    margin-left: 11px;
}

.mic svg {
    stroke: #6bb5ae;
}

.lang {
    margin: 0 13px 0 12px;
}

.sound {
    display: flex;
    gap: 5px;
}

.clock {
    margin-left: 10px;
    text-align: right;
}

/* Stream overlays */
.logo {
    position: absolute;
    top: 0;
    left: 0;
    display: flex;
    align-items: center;
    gap: 8px;
    width: 62px;
    height: 41px;
    padding-left: 7px;
    border-radius: 12px;
    background: rgba(20, 20, 20, 0.75);
    font: bold 30px "Liberation Sans", sans-serif;
}

.logo b {
    color: #52f51c;
    font: bold 29px "DejaVu Sans", sans-serif;
    -webkit-text-stroke: 4px #52f51c;
}

.logo span {
    color: #fff;
    -webkit-text-stroke: 1px #fff;
}

.steam-badge {
    position: absolute;
    top: 47px;
    left: 610px;
    padding: 4px;
    border-radius: 8px;
    background: radial-gradient(#4a4a4a 40%, transparent 70%);
}

.steam-badge svg {
    width: 24px;
    height: 24px;
}

.bio {
    position: absolute;
    top: 230px;
    right: 24px;
    color: #4ea3ea;
    font: bold 17px/32px "DejaVu Sans Condensed", "DejaVu Sans", sans-serif;
}

.donation {
    position: absolute;
    width: 172px;
    height: 43px;
    border: 2px solid #4fa0df;
    border-radius: 7px;
    background:
        radial-gradient(ellipse at 62% 15%, rgba(18, 27, 36, 0.85), transparent 35%),
        radial-gradient(ellipse at 88% 50%, rgba(24, 33, 43, 0.75), transparent 30%),
        linear-gradient(100deg, #2f658f, #416d92 60%, #2c4861);
    box-shadow: inset 0 0 6px #1b344a;
}

.top {
    top: 320px;
    right: 6px;
}

.latest {
    top: 382px;
    right: 5px;
    width: 175px;
}

.donation h2 {
    position: absolute;
    top: -15px;
    left: -5px;
    width: 74px;
    margin: 0;
    color: #fff;
    font: 600 14px/13px "Open Sans", sans-serif;
    text-align: center;
}

/* The label breaks the frame's top edge */
.donation h2 span {
    display: block;
    color: #8fbbe0;
    font-weight: normal;
    background: linear-gradient(#191919 2px, transparent 2px);
}

.donation p {
    margin: 10px 0 0 6px;
    color: #fff;
    font: 18px/20px "Liberation Sans", sans-serif;
    white-space: nowrap;
}

.latest p {
    margin-left: 14px;
}

.cursor {
    position: absolute;
    top: 448px;
    left: 664px;
    width: 10px;
    height: 15px;
}
```
